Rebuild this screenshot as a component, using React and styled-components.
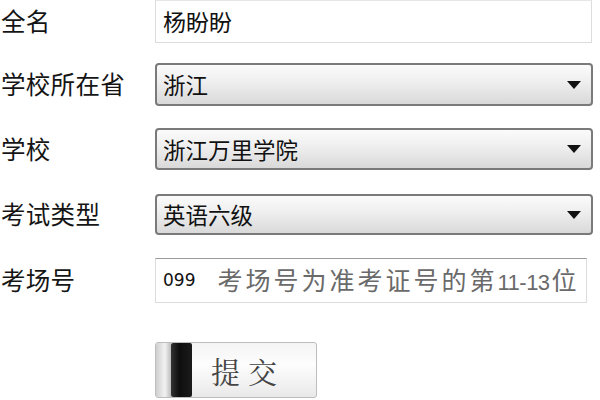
import React from "react";
import styled, { createGlobalStyle } from "styled-components";

const Global = createGlobalStyle`
  html, body { margin: 0; padding: 0; background: #fff; }
  body {
    width: 600px; height: 400px; overflow: hidden;
    font-family: "Noto Sans CJK SC", "Microsoft YaHei", sans-serif;
  }
`;

const Form = styled.div`
  display: flex;
  flex-direction: column;
  padding: 0 7px 0 1px;
`;

const Row = styled.div`
  display: grid;
  grid-template-columns: 154px 1fr;
  align-items: center;
  margin-top: ${(p) => p.$mt || 0}px;
  height: ${(p) => p.$h}px;
`;

const Label = styled.div`
  font-size: 24.5px;
  color: #151515;
  letter-spacing: 0.3px;
  line-height: 1;
`;

const TextField = styled.div`
  box-sizing: border-box;
  height: 100%;
  margin-right: ${(p) => p.$mr || 0}px;
  border: 1px solid #dcdcdc;
  border-top-color: ${(p) => (p.$dark ? "#9a9a9a" : "#e6e6e6")};
  background: #fff;
  display: flex;
  align-items: center;
  padding-left: 7px;
  font-size: 23px;
  color: #111;
  line-height: 1;
  white-space: nowrap;
`;

const Select = styled.div`
  box-sizing: border-box;
  height: 100%;
  border: 2px solid #7a7a7a;
  border-radius: 4px;
  background: linear-gradient(#fbfbfb 0%, #eeeeee 45%, #d9d9d9 100%);
  display: flex;
  align-items: center;
  justify-content: space-between;
  padding: 0 10px 0 6px;
  font-size: 22.5px;
  color: #111;
  line-height: 1;
`;

const Arrow = styled.span`
  width: 0;
  height: 0;
  border-left: 7px solid transparent;
  border-right: 7px solid transparent;
  border-top: 8px solid #111;
`;

const Code = styled.span`
  font-family: "DejaVu Sans", sans-serif;
  font-size: 17px;
  color: #111;
  margin-right: 22px;
`;

const Hint = styled.span`
  font-size: 25px;
  color: #6a6a6a;
  letter-spacing: 3px;
`;

const HintDigits = styled.span`
  font-family: "Liberation Sans", sans-serif;
  font-size: 22px;
  letter-spacing: -0.5px;
  margin-right: 2px;
`;

const ButtonRow = styled.div`
  display: flex;
  margin-top: 39px;
  padding-left: 154px;
`;

const Button = styled.div`
  box-sizing: border-box;
  width: 162px;
  height: 56px;
  border: 1px solid #bdbdbd;
  border-radius: 3px;
  display: flex;
  overflow: hidden;
  background: linear-gradient(#f4f4f4, #fdfdfd 40%, #e9e9e9);
`;

const Grip = styled.div`
  width: 15px;
  background: linear-gradient(90deg, #cfcfcf, #f2f2f2 60%, #bbb);
`;

const Bar = styled.div`
  width: 21px;
  background: linear-gradient(90deg, #333, #0e0e0e 40%, #1b1b1b);
  border-radius: 2px;
`;

const ButtonText = styled.div`
  flex: 1;
  display: flex;
  align-items: center;
  justify-content: center;
  font-family: "Noto Serif CJK SC", "Noto Sans CJK SC", serif;
  font-size: 29px;
  color: #444;
  letter-spacing: 8px;
  padding-right: 12px;
  padding-top: 2px;
`;

export default function App() {
  return (
    <>
      <Global />
      <Form>
        <Row $h={43}>
          <Label>全名</Label>
          <TextField $mr={1}>杨盼盼</TextField>
        </Row>
        <Row $mt={20} $h={43}>
          <Label>学校所在省</Label>
          <Select>
            浙江
            <Arrow />
          </Select>
        </Row>
        <Row $mt={22} $h={42}>
          <Label>学校</Label>
          <Select>
            浙江万里学院
            <Arrow />
          </Select>
        </Row>
        <Row $mt={24} $h={41}>
          <Label>考试类型</Label>
          <Select>
            英语六级
            <Arrow />
          </Select>
        </Row>
        <Row $mt={23} $h={45}>
          <Label>考场号</Label>
          <TextField $dark $mr={6}>
            <Code>099</Code>
            <Hint>
              考场号为准考证号的第<HintDigits>11-13</HintDigits>位
            </Hint>
          </TextField>
        </Row>
        <ButtonRow>
          <Button>
            <Grip />
            <Bar />
            <ButtonText>提交</ButtonText>
          </Button>
        </ButtonRow>
      </Form>
    </>
  );
}
